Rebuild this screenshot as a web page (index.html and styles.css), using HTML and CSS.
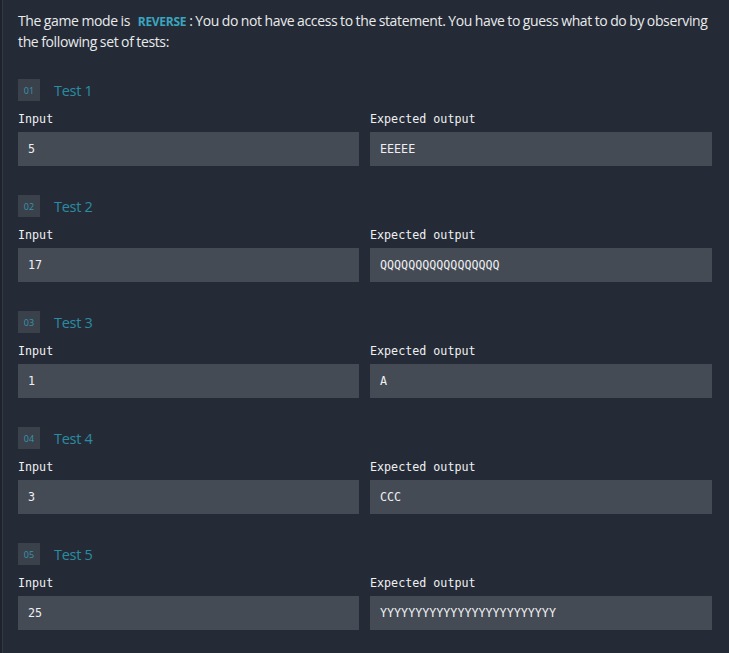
FILE: index.html
```html
<!DOCTYPE html>
<html>
<head>
<meta charset="utf-8">
<link rel="stylesheet" href="styles.css">
</head>
<body>
<div class="page">
  <p class="intro">The game mode is <span class="mode">REVERSE</span>: You do not have access to the statement. You have to guess what to do by observing the following set of tests:</p>

  <div class="test">
    <div class="head"><span class="badge">01</span><span class="title">Test 1</span></div>
    <div class="cols">
      <div class="col"><div class="label">Input</div><div class="box">5</div></div>
      <div class="col"><div class="label">Expected output</div><div class="box">EEEEE</div></div>
    </div>
  </div>

  <div class="test">
    <div class="head"><span class="badge">02</span><span class="title">Test 2</span></div>
    <div class="cols">
      <div class="col"><div class="label">Input</div><div class="box">17</div></div>
      <div class="col"><div class="label">Expected output</div><div class="box">QQQQQQQQQQQQQQQQQ</div></div>
    </div>
  </div>

  <div class="test">
    <div class="head"><span class="badge">03</span><span class="title">Test 3</span></div>
    <div class="cols">
      <div class="col"><div class="label">Input</div><div class="box">1</div></div>
      <div class="col"><div class="label">Expected output</div><div class="box">A</div></div>
    </div>
  </div>

  <div class="test">
    <div class="head"><span class="badge">04</span><span class="title">Test 4</span></div>
    <div class="cols">
      <div class="col"><div class="label">Input</div><div class="box">3</div></div>
      <div class="col"><div class="label">Expected output</div><div class="box">CCC</div></div>
    </div>
  </div>

  <div class="test">
    <div class="head"><span class="badge">05</span><span class="title">Test 5</span></div>
    <div class="cols">
      <div class="col"><div class="label">Input</div><div class="box">25</div></div>
      <div class="col"><div class="label">Expected output</div><div class="box">YYYYYYYYYYYYYYYYYYYYYYYYY</div></div>
    </div>
  </div>
</div>
</body>
</html>
```

FILE: styles.css
```css
html, body {
  margin: 0;
  padding: 0;
  background: #252b36;
  height: 100%;
}
body {
  font-family: "Open Sans", "Liberation Sans", sans-serif;
  color: #e6e8ea;
}
.page {
  min-height: 653px;
  box-sizing: border-box;
  padding: 10px 17px 0 16px;
  border-left: 2px solid #1e232b;
  box-shadow: inset 1px 0 0 #333944;
}
.intro {
  margin: 0;
  font-size: 14px;
  line-height: 21px;
  letter-spacing: -0.36px;
  word-spacing: -0.5px;
  color: #e8eaec;
}
.mode {
  color: #3aa5bf;
  font-weight: 700;
  font-size: 12px;
  line-height: 14px;
  margin: 0 3px 0 5px;
  letter-spacing: -0.3px;
}
.test {
  margin-top: 27px;
}
.test + .test {
  margin-top: 29px;
}
.head {
  display: flex;
  align-items: center;
  height: 22px;
}
.badge {
  width: 22px;
  height: 22px;
  background: #3b414b;
  color: #3495ad;
  font-size: 9px;
  display: flex;
  align-items: center;
  justify-content: center;
}
.title {
  margin-left: 14px;
  color: #2b8ba3;
  font-size: 14.5px;
  letter-spacing: -0.3px;
}
.cols {
  display: grid;
  grid-template-columns: 341px 342px;
  column-gap: 11px;
  margin-top: 9px;
}
.label {
  font-family: "DejaVu Sans Mono", "Liberation Mono", monospace;
  font-size: 11.7px;
  line-height: 18px;
  color: #eef0f2;
}
.box {
  margin-top: 4px;
  height: 34px;
  background: #454b55;
  display: flex;
  align-items: center;
  padding-left: 10px;
  font-family: "DejaVu Sans Mono", "Liberation Mono", monospace;
  font-size: 11.7px;
  color: #eef0f2;
}
```
